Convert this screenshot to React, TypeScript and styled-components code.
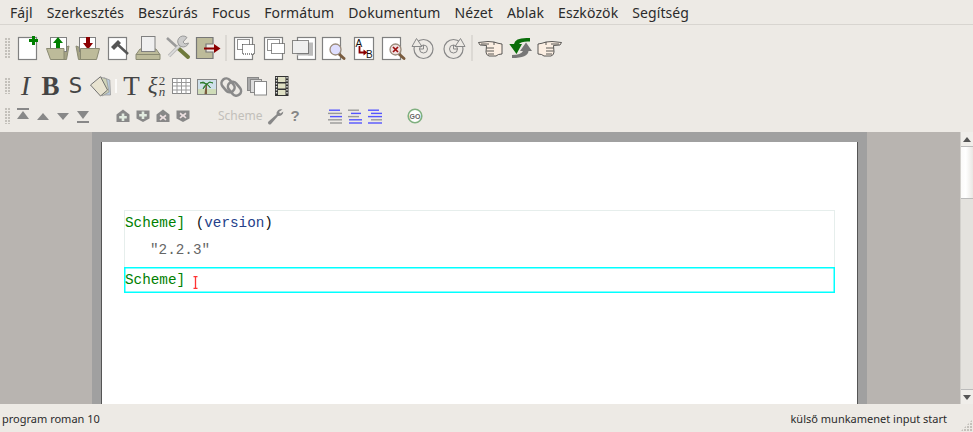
import React from "react";
import styled, { createGlobalStyle } from "styled-components";

const Global = createGlobalStyle`
  html, body { margin: 0; padding: 0; background: #edeae5; }
  #root { width: 973px; height: 432px; overflow: hidden; }
`;

const Shell = styled.div`
  width: 973px; height: 432px; display: flex; flex-direction: column;
  background: #edeae5; color: #2e3436; font-family: "Noto Sans", sans-serif;
`;
const MenuBar = styled.nav`
  height: 24px; flex: none; display: flex; align-items: center; padding-left: 10px;
  gap: 14px; font-size: 14px; letter-spacing: 0.1px; border-bottom: 1px solid #d8d5d0; color: #2b2b2b;
`;
const MenuItem = styled.span`white-space: nowrap;`;
const Toolbar = styled.div<{ $h: number }>`
  height: ${p => p.$h}px; flex: none; display: flex; align-items: center; position: relative;
`;
const Grip = styled.div<{ $h: number }>`
  width: 5px; height: ${p => p.$h}px; margin: 0 3px 0 5px; flex: none;
  background-image: radial-gradient(circle at 1px 1px, #c4c1bb 1px, transparent 1.1px);
  background-size: 3px 3px;
`;
const Btn = styled.div<{ $w: number }>`
  width: ${p => p.$w}px; flex: none; display: flex; align-items: center; justify-content: center;
`;
const Sep = styled.div<{ $w: number; $h: number; $c?: string }>`
  width: ${p => p.$w}px; flex: none; height: ${p => p.$h}px; position: relative;
  display: flex; justify-content: center;
  &::after { content: ""; width: 2px; height: 100%; background: ${p => p.$c || "#dcd9d4"}; }
`;
const Space = styled.div<{ $w: number }>`width: ${p => p.$w}px; flex: none;`;
const Glyph = styled.span<{ $size: number; $bold?: boolean; $italic?: boolean; $font?: string }>`
  font-family: ${p => p.$font || '"Liberation Serif"'}, serif;
  font-size: ${p => p.$size}px; line-height: 28px; color: #444;
  font-weight: ${p => (p.$bold ? 700 : 400)}; font-style: ${p => (p.$italic ? "italic" : "normal")};
`;
const FormulaGlyph = styled.span`
  font-family: "Liberation Serif", serif; font-style: italic; color: #444; font-size: 23px;
  line-height: 28px; display: inline-flex; align-items: center;
`;
const Stack = styled.span`
  display: inline-flex; flex-direction: column; font-size: 13px; line-height: 11px; margin-left: 1px;
`;
const UpRight = styled.span`font-style: normal;`;
const ModeLabel = styled.span`
  font-size: 12px; color: #c2bfba; width: 47px; flex: none; line-height: 20px;
`;
const HelpMark = styled.span`
  font-family: "Liberation Sans", sans-serif; font-weight: 700; font-size: 15px; color: #868686; line-height: 20px;
`;

const Canvas = styled.main`flex: 1; display: flex; min-height: 0; overflow: hidden; margin-top: 1px;`;
const Gutter = styled.div<{ $w: number }>`width: ${p => p.$w}px; flex: none; background: #b8b4b0;`;
const Viewport = styled.div`
  width: 775px; box-sizing: border-box; flex: none; background: #a0a0a0; padding: 10px 10px 0; display: flex;
`;
const Page = styled.div`
  flex: 1; background: #fff; padding: 68px 22px 0; box-shadow: -1px 0 0 #555, 1px 0 0 #555;
  font-family: "Liberation Mono", monospace; font-size: 14.3px;
`;
const Session = styled.div`
  border: 1px solid #e6eeec; border-bottom: none; height: 57px; box-sizing: border-box;
  display: flex; flex-direction: column;
`;
const Divider = styled.div`height: 1px; background: #aaa; margin: 0 1px;`;
const Row = styled.div<{ $h: number; $indent?: number }>`
  height: ${p => p.$h}px; line-height: ${p => p.$h}px; padding-left: ${p => p.$indent || 0}px; white-space: pre;
  color: #111;
`;
const Prompt = styled.span`color: #008000;`;
const Call = styled.span`margin-left: 2px;`;
const Func = styled.span`color: #24408a;`;
const Str = styled.span`color: #666;`;
const Active = styled.div`
  border: 1px solid #00ffff; box-shadow: inset 0 0 0 0.5px #00ffff; height: 26px; box-sizing: border-box;
  line-height: 22px; display: flex; align-items: center; margin-top: -1px;
`;
const Caret = styled.svg`margin-left: 8px; margin-top: 4px; flex: none;`;

const Scroll = styled.div`
  width: 13px; flex: none; background: #e4e2de; border-left: 1px solid #d2d0cc; box-sizing: border-box;
  display: flex; flex-direction: column;
`;
const ScrollEnd = styled.div<{ $down?: boolean }>`
  height: 14px; flex: none; background: #f0eeea; display: flex; align-items: center; justify-content: center;
  border-bottom: ${p => (p.$down ? "none" : "1px solid #bbb")};
  border-top: ${p => (p.$down ? "1px solid #bbb" : "none")};
`;
const ScrollThumb = styled.div`
  height: 51px; flex: none; background: linear-gradient(to right, #fbfaf9, #fff 40%, #e9e7e3);
  border-bottom: 1px solid #bbb;
`;
const ScrollFill = styled.div`flex: 1;`;
const Arrow = styled.div<{ $down?: boolean }>`
  width: 0; height: 0; border-left: 4px solid transparent; border-right: 4px solid transparent;
  ${p => (p.$down ? "border-top: 5px solid #555;" : "border-bottom: 5px solid #555;")}
`;

const Status = styled.footer`
  height: 28px; flex: none; display: flex; justify-content: space-between; align-items: center;
  padding: 0 26px 0 2px; font-size: 11px; color: #2b2b2b; position: relative;
`;
const ResizeGrip = styled.div`
  position: absolute; right: 1px; bottom: 1px; width: 11px; height: 11px;
  background-image: radial-gradient(circle at 1px 1px, #c4c1bb 1px, transparent 1.1px);
  background-size: 3px 3px;
  clip-path: polygon(100% 0, 100% 100%, 0 100%);
`;

const G = "#808080";
const KH = "#bdbb9a";
const KHS = "#8a8a72";

const S1: React.FC<{ children: React.ReactNode }> = ({ children }) => (
  <Btn $w={30}><svg width="30" height="28" viewBox="0 0 30 28">{children}</svg></Btn>
);
const S2: React.FC<{ children: React.ReactNode }> = ({ children }) => (
  <Btn $w={25}><svg width="25" height="28" viewBox="0 0 25 28">{children}</svg></Btn>
);
const S3: React.FC<{ children: React.ReactNode }> = ({ children }) => (
  <Btn $w={20}><svg width="20" height="20" viewBox="0 0 20 20">{children}</svg></Btn>
);

const Page1 = () => <rect x="5.5" y="3.5" width="18" height="22" fill="#fff" stroke={G} strokeWidth="1.2" />;
const Plus = ({ x, y, c }: { x: number; y: number; c: string }) => (
  <path d={`M${x - 1.5} ${y - 4.5}h3v3h3v3h-3v3h-3v-3h-3v-3h3z`} fill={c} />
);
const Dots = (p: { x: number; y: number; w: number; h: number; fill?: string }) => (
  <rect x={p.x} y={p.y} width={p.w} height={p.h} fill={p.fill || "none"} stroke="#222" strokeWidth="1" strokeDasharray="1 1" />
);
const Lens = ({ fill }: { fill: string }) => (
  <>
    <path d="M20 20l5 4.5" stroke="#7a5c3e" strokeWidth="3" strokeLinecap="round" />
    <circle cx="16.5" cy="15.5" r="5.5" fill={fill} stroke="#9a8a7a" strokeWidth="1.3" />
  </>
);
const HandPath = () => (
  <>
    <path d="M3.5 8.5L13 7.5L19 8Q23 9.5 27 10L27 20Q23 20 21 22L14 22Q11 21 11 18L11.5 11.5L5 11Z" fill="#fbeee2" stroke="#333" strokeWidth=".8" />
    <path d="M6 10L14 10M11.5 14H19M11.5 17H19M13 20H19M19 8V11" stroke="#333" strokeWidth=".8" fill="none" />
  </>
);

const row1a = [
  <><Page1 /><Plus x={20.5} y={6.5} c="#007f00" /></>,
  <>
    <path d="M26 12L23.5 25.5H20V14Z" fill="#a5a385" stroke={KHS} />
    <rect x="7.5" y="3.5" width="16" height="14" fill="#fff" stroke={G} />
    <path d="M15 3l5 6h-3v7h-4V9h-3z" fill="#007f00" />
    <path d="M3.5 14.5H21V25.5H7.5Z" fill={KH} stroke={KHS} />
  </>,
  <>
    <path d="M3 12L5.5 25.5H8V14Z" fill="#a5a385" stroke={KHS} />
    <rect x="6.5" y="3.5" width="16" height="14" fill="#fff" stroke={G} />
    <path d="M13 3h4v6h3l-5 6.5L10 9h3z" fill="#8b0000" />
    <path d="M7.5 14.5H26.5L23.5 25.5H7.5Z" fill={KH} stroke={KHS} />
  </>,
  <>
    <Page1 />
    <path d="M13 9L25 20" stroke="#555" strokeWidth="2.5" />
    <path d="M8 13L15 6L18 9L11 16Z" fill="#555" />
  </>,
  <>
    <path d="M7 15H23L27 20.5V25.5H3V20.5Z" fill={KH} stroke={KHS} />
    <rect x="8.5" y="2.5" width="13.5" height="15" fill="#efefef" stroke={G} />
    <path d="M3 20.5H27" stroke={KHS} />
  </>,
  <>
    <path d="M4 4L15 14" stroke="#9a9a9a" strokeWidth="2.5" />
    <path d="M15 14L25 23" stroke="#6f7a3c" strokeWidth="4" strokeLinecap="round" />
    <path d="M6 22L18 10" stroke="#bbb" strokeWidth="3.4" />
    <path d="M6 22L18 10" stroke="#ddd" strokeWidth="1.6" />
    <path d="M24 3.5A5.5 5.5 0 1 0 25.5 9L22 10L20 8Z" fill="#ccc" stroke="#999" />
  </>,
  <>
    <path d="M3.5 3.5H20V10H13V18H20V24.5H3.5Z" fill={KH} stroke="#777" strokeWidth="1.2" />
    <path d="M11 14.5H22" stroke="#8b0000" strokeWidth="2" />
    <path d="M21 10l6.5 4.5L21 19z" fill="#8b0000" />
  </>,
];
const row1b = [
  <><Page1 /><Dots x={8.5} y={5.5} w={12} h={10} fill="#fff" /><Dots x={13.5} y={10.5} w={12} h={9.5} fill="#fff" /></>,
  <><Page1 /><Dots x={8.5} y={5.5} w={12} h={11} /><Dots x={12.5} y={9.5} w={13} h={10} fill="#fff" /></>,
  <>
    <rect x="8.5" y="3.5" width="18" height="22" fill="#fff" stroke={G} strokeWidth="1.2" />
    <rect x="19" y="8.5" width="5" height="13" fill="#bbb" />
    <rect x="8" y="19" width="16" height="2.5" fill="#bbb" />
    <Dots x={3.5} y={6.5} w={16} h={13} fill="#efefef" />
  </>,
  <>
    <rect x="3.5" y="3.5" width="18" height="22" fill="#fff" stroke={G} strokeWidth="1.2" />
    <Lens fill="#dfdfff" />
  </>,
  <>
    <rect x="5.5" y="3.5" width="19" height="22" fill="#fff" stroke={G} strokeWidth="1.2" />
    <text x="6.5" y="12.5" fontSize="10" fontFamily="Liberation Sans" fill="#111">A</text>
    <text x="17" y="24" fontSize="10" fontFamily="Liberation Sans" fill="#111">B</text>
    <path d="M10.5 12V18.5H16" fill="none" stroke="#8b0000" strokeWidth="1.8" />
    <path d="M14.5 15.5l4 3-4 3z" fill="#8b0000" />
  </>,
  <>
    <rect x="3.5" y="3.5" width="18" height="22" fill="#fff" stroke={G} strokeWidth="1.2" />
    <Lens fill="#f0e0e0" />
    <path d="M14 13l5 5M19 13l-5 5" stroke="#9b1010" strokeWidth="1.7" />
  </>,
  <>
    <circle cx="14.5" cy="15" r="9.5" fill="none" stroke="#888" strokeWidth="1.2" />
    <path d="M7.5 4.5L3 12.5H13Z" fill="#edeae5" stroke="#888" />
    <circle cx="14.5" cy="15" r="4" fill="none" stroke="#888" />
    <path d="M14.5 11V15H10" fill="none" stroke="#888" />
  </>,
  <>
    <circle cx="14.5" cy="15" r="9.5" fill="none" stroke="#888" strokeWidth="1.2" />
    <path d="M21.5 4.500L26 12.500H16Z" fill="#edeae5" stroke="#888" />
    <circle cx="14.5" cy="15" r="4" fill="none" stroke="#888" />
    <path d="M14.5 11V15H19" fill="none" stroke="#888" />
  </>,
];
const row1c = [
  <HandPath />,
  <>
    <path d="M21 8.5L27 17H23.5Q23 24 7 24V21Q16 21 18 17H15Z" fill="#777" />
    <path d="M9 10Q10 3 25 4V7.5Q16 7 14 10H17L11.5 20L4.3 10Z" fill="#0a6e0a" />
  </>,
  <g transform="translate(30 0) scale(-1 1)"><HandPath /></g>,
];
const row2 = [
  <>
    <path d="M15.800 5.700L21.800 8L22.500 23L14 23Z" fill="#b9cbdc" stroke="#999" strokeWidth=".8" />
    <path d="M13 5.200L18.500 7L21 20L14 24Z" fill="#cfd3b8" stroke="#999" strokeWidth=".8" />
    <path d="M2.500 13L12.500 4.700L19.500 18L12.500 24Z" fill="#e8e3d0" stroke="#666" strokeWidth=".9" />
  </>,
];
const row2b = [
  <>
    <rect x="3.5" y="6.5" width="18" height="15" fill="#fff" stroke="#888" />
    <path d="M8 6.5V21.5M12.5 6.5V21.5M17 6.5V21.5M3.5 10.5H21.5M3.5 14H21.5M3.5 18H21.5" stroke="#999" strokeWidth="1" />
  </>,
  <>
    <rect x="3.5" y="7.5" width="19" height="15" fill="#cfe0ea" stroke="#888" />
    <rect x="4" y="17" width="18" height="5" fill="#cfdcb8" />
    <path d="M12 12Q11 17 10.5 22H13Q13 16 13 12" fill="#7a5c3e" />
    <path d="M12.5 12Q9 8.5 6 11Q9 10.5 12.5 12Q10 13.5 9 17Q12 14 12.5 12Q16 9 19 11Q16 8.5 12.5 12Q15 14 16.5 16Q15 13 12.5 12" fill="#2a7a2a" stroke="#2a7a2a" strokeWidth=".8" />
  </>,
  <>
    <rect x="2.5" y="6" width="9.5" height="15" rx="4.7" transform="rotate(-40 8 11)" fill="none" stroke="#8a8a8a" strokeWidth="2.6" />
    <rect x="11" y="9" width="9.5" height="15" rx="4.7" transform="rotate(-40 16 17)" fill="none" stroke="#8a8a8a" strokeWidth="2.6" />
  </>,
  <>
    <rect x="3.5" y="5.5" width="11" height="13" fill="#aaa" stroke="#888" />
    <rect x="6.5" y="7.5" width="11" height="13" fill="#ddd" stroke="#888" />
    <rect x="10.5" y="9.5" width="12" height="13.5" fill="#fff" stroke="#888" />
  </>,
  <>
    <rect x="6" y="4" width="13.5" height="20" fill="#333" />
    <rect x="9" y="5" width="7.5" height="5" fill="#dfe0c4" />
    <rect x="9" y="11.5" width="7.5" height="5" fill="#dfe0c4" />
    <rect x="9" y="18" width="7.5" height="5" fill="#dfe0c4" />
    <path d="M7.5 5v18M18 5v18" stroke="#ddd" strokeWidth="1.4" strokeDasharray="1.5 1.5" />
  </>,
];
const C3 = "#888";
const navIcons = [
  <><rect x="4" y="2" width="12" height="2" fill={C3} /><path d="M10 5l6 8H4z" fill={C3} /></>,
  <path d="M10 7l6 7H4z" fill={C3} />,
  <path d="M10 14l6-7H4z" fill={C3} />,
  <><path d="M10 13l6-8H4z" fill={C3} /><rect x="4" y="15" width="12" height="2" fill={C3} /></>,
];
const House = ({ mark, tip }: { mark: string; tip?: boolean }) => (
  <>
    {tip
      ? <path d="M3.500 4.500h13v8l-6.500 3.500l-6.500-3.500z" fill={C3} />
      : <path d="M10 3.500l6.500 5v7.500h-13v-7.500z" fill={C3} />}
    {mark === "p"
      ? <path d="M8.700 7.500h2.600v2.500h2.500v2.500h-2.500v2.500h-2.600v-2.500h-2.500v-2.500h2.500z" fill="#e2ece0" transform={tip ? "translate(0 -2)" : undefined} />
      : <path d="M7.500 8.500L10 10.500L12.500 8.500L13.500 10L11.500 11.500L13.500 13.500L12.500 14.500L10 12.500L7.500 14.500L6.500 13.500L8.500 11.500L6.500 10Z" fill="#ecdfe0" transform={tip ? "translate(0 -2)" : undefined} />}
  </>
);
const AlignIcon = ({ lines }: { lines: [number, number, string][] }) => (
  <svg width="20" height="20" viewBox="0 0 20 20">
    {lines.map(([x, w, c], i) => <rect key={i} x={x} y={3.500 + i * 3.200} width={w} height="1.400" fill={c} />)}
  </svg>
);
const B = "#5555ff";
const K = "#999";

const menus = ["Fájl", "Szerkesztés", "Beszúrás", "Focus", "Formátum", "Dokumentum", "Nézet", "Ablak", "Eszközök", "Segítség"];

export default function App() {
  return (
    <Shell>
      <Global />
      <MenuBar>{menus.map(m => <MenuItem key={m}>{m}</MenuItem>)}</MenuBar>

      <Toolbar $h={46}>
        <Grip $h={20} />
        {row1a.map((c, i) => <S1 key={i}>{c}</S1>)}
        <Sep $w={6} $h={26} />
        {row1b.map((c, i) => <S1 key={i}>{c}</S1>)}
        <Sep $w={6} $h={26} />
        {row1c.map((c, i) => <S1 key={i}>{c}</S1>)}
      </Toolbar>

      <Toolbar $h={30}>
        <Grip $h={16} />
        <Btn $w={25}><Glyph $size={27} $italic>I</Glyph></Btn>
        <Btn $w={25}><Glyph $size={27} $bold>B</Glyph></Btn>
        <Btn $w={25}><Glyph $size={21} $font='"DejaVu Sans"'>S</Glyph></Btn>
        {row2.map((c, i) => <S2 key={i}>{c}</S2>)}
        <Sep $w={6} $h={14} $c="#fbfaf8" />
        <Btn $w={25}><Glyph $size={27}>T</Glyph></Btn>
        <Btn $w={25}>
          <FormulaGlyph>ξ<Stack><UpRight>2</UpRight><span>n</span></Stack></FormulaGlyph>
        </Btn>
        {row2b.map((c, i) => <S2 key={i}>{c}</S2>)}
      </Toolbar>

      <Toolbar $h={30}>
        <Grip $h={16} />
        {navIcons.map((c, i) => <S3 key={i}>{c}</S3>)}
        <Space $w={20} />
        <S3><House mark="p" /></S3>
        <S3><House mark="p" tip /></S3>
        <S3><House mark="x" /></S3>
        <S3><House mark="x" tip /></S3>
        <Space $w={25} />
        <ModeLabel>Scheme</ModeLabel>
        <S3>
          <path d="M17.500 3.500A4.500 4.500 0 0 0 11.500 8.500L3.500 15.500A1.500 1.500 0 0 0 6 18L13 10A4.500 4.500 0 0 0 18.300 5.500L15.500 7.500L13.800 6Z" fill={C3} />
        </S3>
        <Btn $w={20}><HelpMark>?</HelpMark></Btn>
        <Space $w={20} />
        <Btn $w={20}><AlignIcon lines={[[4, 11, B], [3, 14, K], [5, 12, B], [3, 14, K], [5, 12, K]]} /></Btn>
        <Btn $w={20}><AlignIcon lines={[[3, 11, K], [6, 10, B], [3, 11, K], [4, 13, B], [4, 13, B]]} /></Btn>
        <Btn $w={20}><AlignIcon lines={[[3, 11, B], [6, 11, B], [3, 14, B], [6, 11, K], [3, 14, B]]} /></Btn>
        <Space $w={20} />
        <S3>
          <circle cx="10" cy="10" r="6.800" fill="#fff" stroke="#80b080" strokeWidth="1.600" />
          <text x="10" y="12.500" textAnchor="middle" fontSize="7" fontWeight="700" fontFamily="Liberation Sans" fill="#666">GO</text>
        </S3>
      </Toolbar>

      <Canvas>
        <Gutter $w={92} />
        <Viewport>
          <Page>
            <Session>
              <Row $h={24}><Prompt>Scheme]</Prompt> <Call>(<Func>version</Func>)</Call></Row>
              <Row $h={31} $indent={25}><Str>"2.2.3"</Str></Row>
            </Session>
            <Divider />
            <Active>
              <Prompt>Scheme]</Prompt>
              <Caret width="5" height="13" viewBox="0 0 5 13">
                <path d="M0.500 0.500H4.500M2.500 0.500V12.500M0.500 12.500H4.500" stroke="#f33" strokeWidth="1.300" fill="none" />
              </Caret>
            </Active>
          </Page>
        </Viewport>
        <Gutter $w={93} />
        <Scroll>
          <ScrollEnd><Arrow /></ScrollEnd>
          <ScrollThumb />
          <ScrollFill />
          <ScrollEnd $down><Arrow $down /></ScrollEnd>
        </Scroll>
      </Canvas>

      <Status>
        <span>program roman 10</span>
        <span>külső munkamenet input start</span>
        <ResizeGrip />
      </Status>
    </Shell>
  );
}
